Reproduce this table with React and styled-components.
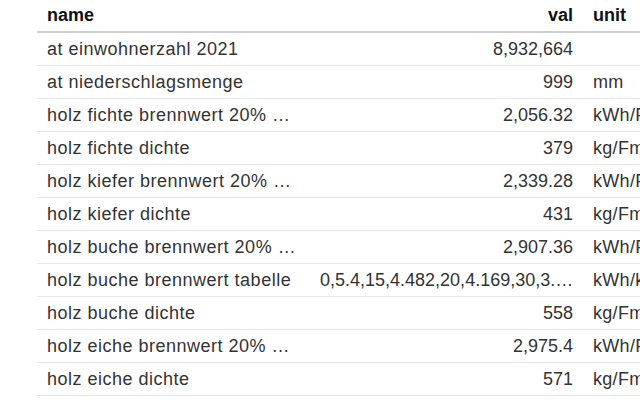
import styled, { createGlobalStyle } from 'styled-components';

const GlobalStyle = createGlobalStyle`
    html, body {
        margin: 0;
        padding: 0;
        background: #ffffff;
        overflow: hidden;
    }
    body {
        font-family: 'Liberation Sans', Arial, sans-serif;
    }
`;

const linhas = [
    { name: 'at einwohnerzahl 2021', val: '8,932,664', unit: '' },
    { name: 'at niederschlagsmenge', val: '999', unit: 'mm' },
    { name: 'holz fichte brennwert 20% …', val: '2,056.32', unit: 'kWh/Fm' },
    { name: 'holz fichte dichte', val: '379', unit: 'kg/Fm' },
    { name: 'holz kiefer brennwert 20% …', val: '2,339.28', unit: 'kWh/Fm' },
    { name: 'holz kiefer dichte', val: '431', unit: 'kg/Fm' },
    { name: 'holz buche brennwert 20% …', val: '2,907.36', unit: 'kWh/Fm' },
    { name: 'holz buche brennwert tabelle', val: '0,5.4,15,4.482,20,4.169,30,3.…', unit: 'kWh/kg' },
    { name: 'holz buche dichte', val: '558', unit: 'kg/Fm' },
    { name: 'holz eiche brennwert 20% …', val: '2,975.4', unit: 'kWh/Fm' },
    { name: 'holz eiche dichte', val: '571', unit: 'kg/Fm' },
];

function App() {
    return (
        <>
            <GlobalStyle />
            <Fundo>
                <Tabela>
                    <thead>
                        <tr>
                            <Cabecalho $largura={253}>name</Cabecalho>
                            <Cabecalho $largura={253} $direita>val</Cabecalho>
                            <Cabecalho $largura={70}>unit</Cabecalho>
                        </tr>
                    </thead>
                    <tbody>
                        {linhas.map(linha => (
                            <Linha key={linha.name}>
                                <CelulaNome>{linha.name}</CelulaNome>
                                <CelulaValor>{linha.val}</CelulaValor>
                                <CelulaUnidade>{linha.unit}</CelulaUnidade>
                            </Linha>
                        ))}
                    </tbody>
                </Tabela>
            </Fundo>
        </>
    );
}
export default App;

const Fundo = styled.div`
    width: 640px;
    height: 400px;
    overflow: hidden;
    padding-left: 37px;
    box-sizing: border-box;
`;

const Tabela = styled.table`
    border-collapse: collapse;
    table-layout: fixed;
    width: 636px;
    min-width: 636px;
    font-size: 18px;
    color: #333333;
`;

const Cabecalho = styled.th`
    width: ${props => props.$largura}px;
    height: 31px;
    padding: 0 10px;
    text-align: ${props => (props.$direita ? 'right' : 'left')};
    font-weight: 700;
    color: #111111;
    border-bottom: 2px solid #d0d0d0;
    white-space: nowrap;
    vertical-align: middle;
`;

const Linha = styled.tr`
    border-bottom: 1px solid #e6e6e6;
`;

const Celula = styled.td`
    height: 32px;
    padding: 0 10px;
    white-space: nowrap;
    overflow: hidden;
    vertical-align: middle;
`;

const CelulaNome = styled(Celula)`
    text-align: left;
    letter-spacing: 0.5px;
`;

const CelulaValor = styled(Celula)`
    text-align: right;
`;

const CelulaUnidade = styled(Celula)`
    text-align: left;
    letter-spacing: 0.3px;
`;
